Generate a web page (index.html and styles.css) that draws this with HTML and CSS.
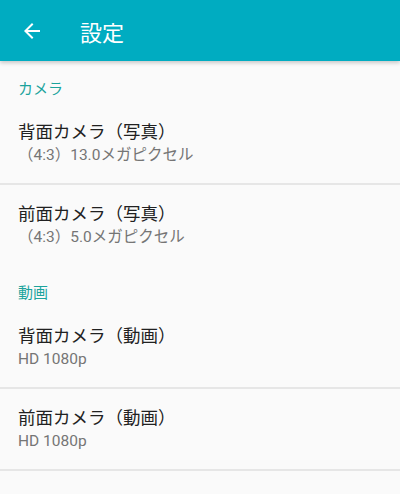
FILE: index.html
```html
<!DOCTYPE html>
<html lang="ja">
<head>
    <meta charset="UTF-8">
    <meta name="viewport" content="width=device-width, initial-scale=1.0">
    <title>設定</title>
    <link rel="stylesheet" href="styles.css">
</head>
<body>
    <!-- Toolbar -->
    <header class="toolbar">
        <svg class="back-icon" width="24" height="24" viewBox="0 0 24 24">
            <path d="M20 11H7.83l5.59-5.59L12 4l-8 8 8 8 1.41-1.41L7.83 13H20v-2z" fill="#fff"/>
        </svg>
        <h1 class="toolbar-title">設定</h1>
    </header>

    <!-- Camera settings -->
    <div class="category">カメラ</div>
    <div class="pref">
        <div class="pref-title">背面カメラ（写真）</div>
        <div class="pref-summary">（4:3）13.0メガピクセル</div>
    </div>
    <div class="pref pref-last">
        <div class="pref-title">前面カメラ（写真）</div>
        <div class="pref-summary">（4:3）5.0メガピクセル</div>
    </div>

    <!-- Video settings -->
    <div class="category">動画</div>
    <div class="pref">
        <div class="pref-title">背面カメラ（動画）</div>
        <div class="pref-summary">HD 1080p</div>
    </div>
    <div class="pref">
        <div class="pref-title">前面カメラ（動画）</div>
        <div class="pref-summary">HD 1080p</div>
    </div>
</body>
</html>
```

FILE: styles.css
```css
body {
    font-family: Roboto, "Noto Sans CJK JP", sans-serif;
    background-color: #fafafa;
    margin: 0;
    padding: 0;
}

.toolbar {
    display: flex;
    align-items: center;
    height: 61px;
    background-color: #00acc1;
    box-shadow: 0 2px 4px rgba(0, 0, 0, 0.2);
    position: relative;
}

.back-icon {
    margin-left: 20px;
    width: 24px;
    height: 24px;
}

.toolbar-title {
    margin: 0 0 0 36px;
    font-size: 22px;
    font-weight: normal;
    color: white;
}

.category {
    padding: 20px 18px 5px;
    font-size: 15px;
    line-height: 17px;
    color: #1ba39c;
}

.pref {
    padding: 18px 18px;
    height: 44px;
    border-bottom: 2px solid #e6e6e6;
}

.pref-last {
    border-bottom: none;
}

.pref-title {
    font-size: 17.5px;
    line-height: 22px;
    color: #212121;
}

.pref-summary {
    margin-top: 2px;
    font-size: 15.5px;
    line-height: 20px;
    color: #757575;
}
```
